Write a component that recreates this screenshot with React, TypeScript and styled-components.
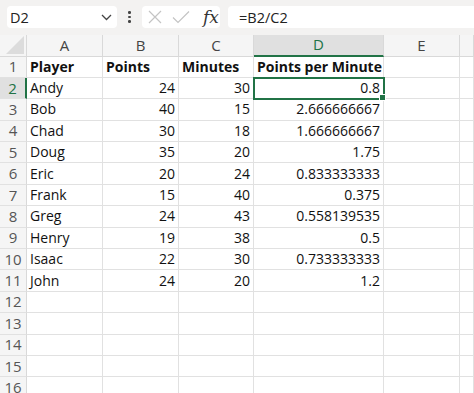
import React from 'react'
import styled, { createGlobalStyle } from 'styled-components'

const GlobalStyle = createGlobalStyle`
  html, body {
    margin: 0;
    padding: 0;
    background: #f3f2f1;
    overflow: hidden;
  }
  body {
    font-family: 'Open Sans', 'Noto Sans', sans-serif;
  }
`

const columns = ['A', 'B', 'C', 'D', 'E', '']

const rows: (string | number)[][] = [
  ['Player', 'Points', 'Minutes', 'Points per Minute'],
  ['Andy', 24, 30, '0.8'],
  ['Bob', 40, 15, '2.666666667'],
  ['Chad', 30, 18, '1.666666667'],
  ['Doug', 35, 20, '1.75'],
  ['Eric', 20, 24, '0.833333333'],
  ['Frank', 15, 40, '0.375'],
  ['Greg', 24, 43, '0.558139535'],
  ['Henry', 19, 38, '0.5'],
  ['Isaac', 22, 30, '0.733333333'],
  ['John', 24, 20, '1.2']
]

const TOTAL_ROWS = 16

const App: React.FC = () => {
  return (
    <Page>
      <GlobalStyle />
      <Toolbar>
        <NameBox>
          <span>D2</span>
          <svg width="11" height="7" viewBox="0 0 11 7">
            <path d="M1 1 L5.5 5.5 L10 1" fill="none" stroke="#444" strokeWidth="1.3" />
          </svg>
        </NameBox>
        <Dots>
          <i />
          <i />
          <i />
        </Dots>
        <FxBox>
          <svg width="14" height="14" viewBox="0 0 14 14">
            <path d="M1 1 L13 13 M13 1 L1 13" stroke="#c4c4c4" strokeWidth="1.2" />
          </svg>
          <svg width="18" height="14" viewBox="0 0 18 14">
            <path d="M1 7.5 L6 12.5 L17 1.5" fill="none" stroke="#c4c4c4" strokeWidth="1.2" />
          </svg>
          <FxLabel>fx</FxLabel>
        </FxBox>
        <FormulaBox>=B2/C2</FormulaBox>
      </Toolbar>
      <Sheet>
        <Corner>
          <svg width="18" height="18" viewBox="0 0 18 18">
            <path d="M18 0 L18 18 L0 18 Z" fill="#dcdcdc" />
          </svg>
        </Corner>
        {columns.map((c, i) => (
          <ColHeader key={'h' + i} $active={c === 'D'}>
            {c}
          </ColHeader>
        ))}
        {Array.from({ length: TOTAL_ROWS }).map((_, r) => {
          const data = rows[r] || []
          return (
            <React.Fragment key={r}>
              <RowHeader $active={r === 1}>{r + 1}</RowHeader>
              {columns.map((_c, ci) => {
                const v = data[ci]
                const numeric = r > 0 && ci > 0 && v !== undefined
                return (
                  <Cell
                    key={ci}
                    $bold={r === 0}
                    $right={numeric}
                    $selected={r === 1 && ci === 3}
                  >
                    {v}
                    {r === 1 && ci === 3 && <Handle />}
                  </Cell>
                )
              })}
            </React.Fragment>
          )
        })}
      </Sheet>
    </Page>
  )
}

export default App

const Page = styled.div`
  width: 474px;
  height: 393px;
  display: flex;
  flex-direction: column;
  overflow: hidden;
`

const Toolbar = styled.div`
  display: flex;
  align-items: center;
  height: 22px;
  padding: 6px 0 7px 7px;
`

const NameBox = styled.div`
  width: 110px;
  height: 22px;
  box-sizing: border-box;
  background: #fff;
  border-radius: 4px;
  display: flex;
  align-items: center;
  justify-content: space-between;
  padding: 0 5px 0 3px;
  font-size: 14.5px;
  color: #222;

  svg {
    margin-top: 1px;
  }
`

const Dots = styled.div`
  width: 25px;
  display: flex;
  flex-direction: column;
  align-items: center;
  gap: 2px;

  i {
    display: block;
    width: 2.5px;
    height: 2.5px;
    border-radius: 50%;
    background: #444;
  }
`

const FxBox = styled.div`
  width: 78px;
  height: 22px;
  box-sizing: border-box;
  background: #fff;
  border-radius: 4px;
  display: flex;
  align-items: center;
  gap: 10px;
  padding: 0 0 0 6px;
`

const FxLabel = styled.span`
  font-family: 'DejaVu Serif', 'Liberation Serif', serif;
  font-style: italic;
  font-size: 17px;
  color: #333;
  margin-left: 3px;
  line-height: 1;
`

const FormulaBox = styled.div`
  flex: 1;
  height: 22px;
  margin-left: 8px;
  background: #fff;
  border-radius: 4px 0 0 4px;
  display: flex;
  align-items: center;
  padding-left: 11px;
  font-size: 14.5px;
  color: #222;
`

const Sheet = styled.div`
  display: grid;
  grid-template-columns: 27px 76px 76px 75px 130px 76px 1fr;
  grid-template-rows: 21.5px repeat(${TOTAL_ROWS}, 21.4px);
  background: #fff;
  font-size: 14px;
`

const Corner = styled.div`
  background: #f5f5f5;
  border-right: 1px solid #d9d9d9;
  border-bottom: 1px solid #d9d9d9;
  display: flex;
  align-items: flex-end;
  justify-content: flex-end;
  padding: 0 2px 2px 0;
  box-sizing: border-box;
`

const ColHeader = styled.div<{ $active?: boolean }>`
  box-sizing: border-box;
  background: ${(p) => (p.$active ? '#e0e0e0' : '#f5f5f5')};
  border-right: 1px solid #d9d9d9;
  border-bottom: ${(p) => (p.$active ? '2px solid #217346' : '1px solid #d9d9d9')};
  color: ${(p) => (p.$active ? '#217346' : '#444')};
  display: flex;
  align-items: center;
  justify-content: center;
  font-size: 15px;
  line-height: 1;
`

const RowHeader = styled.div<{ $active?: boolean }>`
  box-sizing: border-box;
  background: ${(p) => (p.$active ? '#e0e0e0' : '#f5f5f5')};
  border-right: ${(p) => (p.$active ? '2px solid #217346' : '1px solid #d9d9d9')};
  border-bottom: 1px solid #e1e1e1;
  color: ${(p) => (p.$active ? '#217346' : '#555')};
  display: flex;
  align-items: center;
  justify-content: center;
  font-size: 15px;
  line-height: 1;
`

const Cell = styled.div<{ $bold?: boolean; $right?: boolean; $selected?: boolean }>`
  position: relative;
  box-sizing: border-box;
  border-right: 1px solid #e1e1e1;
  border-bottom: 1px solid #e1e1e1;
  padding: 0 3px;
  display: flex;
  align-items: center;
  justify-content: ${(p) => (p.$right ? 'flex-end' : 'flex-start')};
  font-weight: ${(p) => (p.$bold ? 700 : 400)};
  color: #111;
  white-space: nowrap;
  line-height: 1;
  ${(p) =>
    p.$selected &&
    `
    outline: 2px solid #217346;
    outline-offset: -1px;
    z-index: 1;
  `}
`

const Handle = styled.span`
  position: absolute;
  right: -3px;
  bottom: -3px;
  width: 5px;
  height: 5px;
  background: #217346;
  border: 1px solid #fff;
`
